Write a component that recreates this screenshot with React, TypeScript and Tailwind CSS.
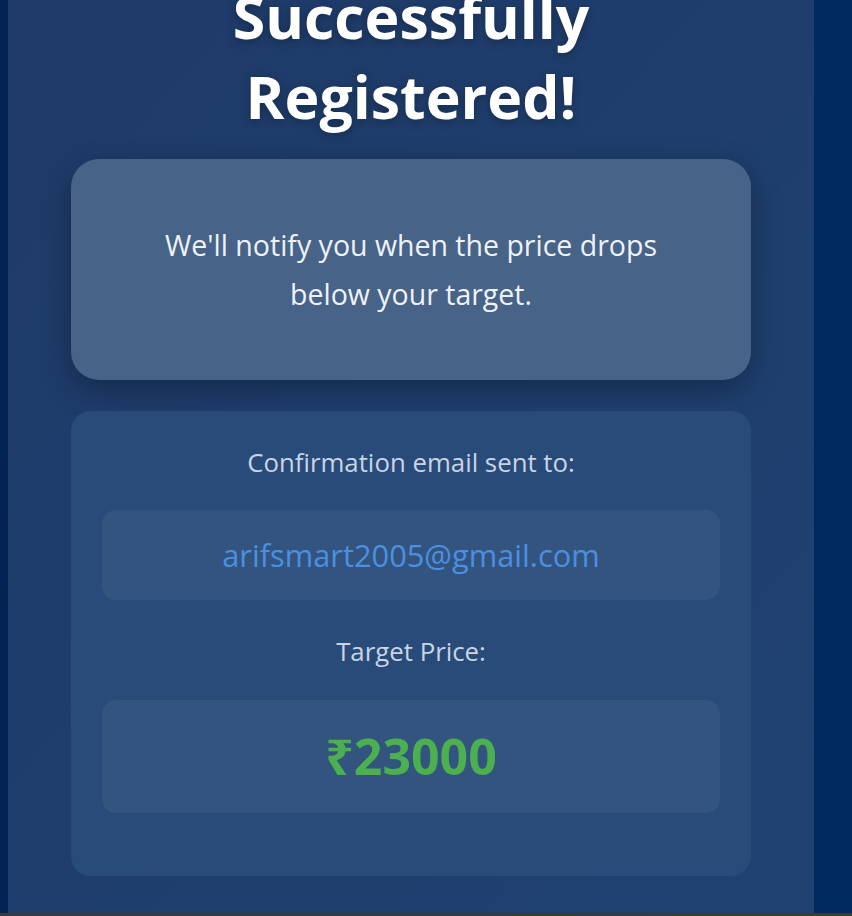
import React from 'react';

const font = { fontFamily: '"Open Sans", "Noto Sans", sans-serif' };

const App: React.FC = () => {
  return (
    <div className="flex flex-col h-[916px] w-full overflow-hidden" style={font}>
      <div className="flex flex-1 overflow-hidden bg-gradient-to-r from-[#022353] to-[#002a5f] pl-2 pr-[38px]">
        <main className="flex-1 flex flex-col items-center bg-gradient-to-br from-[#1e3a68] via-[#1f3e6d] to-[#1f4272]">
          <h1 className="-mt-[24px] mb-[23px] text-center text-[59px] leading-[80px] font-bold text-white drop-shadow-[0_2px_4px_rgba(0,0,0,0.3)]">
            Successfully
            <br />
            Registered!
          </h1>

          <div className="w-[680px] h-[221px] shrink-0 rounded-[28px] bg-[#476387] shadow-[0_10px_30px_rgba(0,0,0,0.3)] flex items-center justify-center">
            <p className="text-center text-[28.5px] leading-[49px] text-[#eef2f8] w-[540px]">
              We'll notify you when the price drops below your target.
            </p>
          </div>

          <div className="mt-[31px] w-[680px] shrink-0 rounded-[20px] bg-[#284b79] px-[31px] pt-[29px] pb-[63px] flex flex-col">
            <div className="h-[44px] flex items-center justify-center text-[25.8px] text-[#c9d4e4]">
              Confirmation email sent to:
            </div>
            <div className="mt-[26px] h-[90px] rounded-[14px] bg-[#33547e] flex items-center justify-center text-[30.8px] text-[#4a90e2]">
              arifsmart2005@gmail.com
            </div>
            <div className="mt-[29px] h-[44px] flex items-center justify-center text-[25.8px] text-[#c9d4e4]">
              Target Price:
            </div>
            <div className="mt-[27px] h-[113px] rounded-[14px] bg-[#33547e] flex items-center justify-center text-[50px] font-bold text-[#4caf50]">
              ₹23000
            </div>
          </div>
        </main>
      </div>
      <div className="h-[3px] bg-[#3a3a3a]" />
    </div>
  );
};

export default App;
